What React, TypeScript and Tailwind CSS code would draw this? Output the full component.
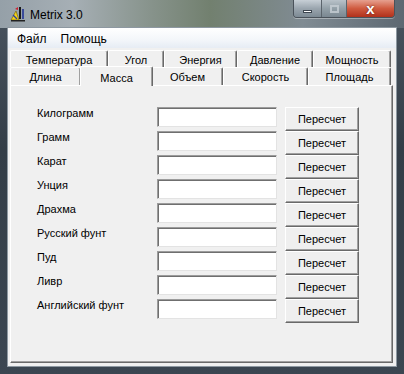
import { Fragment } from "react";

const topTabs = [
  { name: "Температура", w: "w-[98px]" },
  { name: "Угол", w: "w-[56px]" },
  { name: "Энергия", w: "w-[73px]" },
  { name: "Давление", w: "w-[76px]" },
  { name: "Мощность", w: "w-[78px]" },
];

const bottomTabs = [
  { name: "Длина", w: "w-[71px]" },
  { name: "Масса", w: "w-[71px]", active: true },
  { name: "Объем", w: "w-[71px]" },
  { name: "Скорость", w: "w-[85px]" },
  { name: "Площадь", w: "w-[83px]" },
];

const units = [
  "Килограмм",
  "Грамм",
  "Карат",
  "Унция",
  "Драхма",
  "Русский фунт",
  "Пуд",
  "Ливр",
  "Английский фунт",
];

function AppIcon() {
  return (
    <svg width="16" height="16" viewBox="0 0 16 16" className="shrink-0">
      <rect x="9" y="1" width="2" height="12" fill="#1a1a1a" />
      <rect x="12" y="3" width="2" height="10" fill="#3a4a9a" />
      <path d="M1 14 L6 5 L9 14 Z" fill="#f2d21b" stroke="#6b5a00" strokeWidth="0.6" />
      <path d="M3 9 L7 13" stroke="#2b3f9e" strokeWidth="1.2" />
      <rect x="1" y="14" width="14" height="1.5" fill="#222" />
      <path d="M5 3 L8 1 L8 4 Z" fill="#c23" />
    </svg>
  );
}

function Tab({ name, w }: { name: string; w: string }) {
  return (
    <div
      className={`${w} h-full flex items-start justify-center pt-[4px] border-t border-l border-white border-r border-r-[#696969] shadow-[inset_-1px_0_0_#a0a0a0] rounded-tl-[2px] rounded-tr-[2px] bg-[#f0f0f0] text-[11px] text-black leading-none`}
    >
      {name}
    </div>
  );
}

export default function App() {
  return (
    <div className="w-[404px] h-[374px] overflow-hidden flex flex-col bg-[linear-gradient(180deg,#4a5560,#333d47_40%,#3b4651)] font-['Liberation_Sans',sans-serif]">
      {/* title bar */}
      <div className="h-[28px] shrink-0 flex items-start bg-[linear-gradient(90deg,#95a0a8,#a6afb5_18%,#86928a_38%,#72806f_52%,#808b93_75%,#5d6872)]">
        <div className="flex items-center gap-[4px] pl-[10px] pt-[6px]">
          <AppIcon />
          <span className="text-[12px] text-black leading-none pt-[1px]">Metrix 3.0</span>
        </div>
        <div className="ml-auto mr-[9px] flex h-[18px] rounded-b-[4px] border border-t-0 border-[#4a525a] overflow-hidden shadow-[0_1px_0_rgba(255,255,255,0.35)]">
          <div className="w-[28px] flex items-end justify-center pb-[4px] bg-[linear-gradient(180deg,#c7cfd6,#9aa5ae_50%,#7d8a94)] border-r border-[#5b646c]">
            <div className="w-[9px] h-[3px] bg-white border border-[#3d4650]" />
          </div>
          <div className="w-[25px] flex items-center justify-center bg-[linear-gradient(180deg,#b9c2c9,#93a0a8_50%,#7a8791)] border-r border-[#5b646c]">
            <div className="w-[9px] h-[8px] border-[2px] border-[#c7ced4] opacity-80" />
          </div>
          <div className="w-[47px] flex items-center justify-center bg-[linear-gradient(180deg,#e6a08f,#cf5a3f_50%,#b1301b)]">
            <span className="text-white font-bold text-[15px] leading-none -mt-[1px] [text-shadow:0_0_2px_#5a1a0c]">x</span>
          </div>
        </div>
      </div>

      {/* client area */}
      <div className="mx-[8px] h-[338px] flex flex-col bg-[#f0f0f0] shadow-[0_0_0_1px_#8d98a1]">
        {/* menu bar */}
        <div className="h-[20px] shrink-0 flex items-center gap-[14px] pl-[9px] pt-[1px] bg-[linear-gradient(180deg,#ffffff,#f3f6fa_60%,#e6ecf4)] text-[12px] text-black">
          <span>Файл</span>
          <span>Помощь</span>
        </div>

        {/* tabs */}
        <div className="pt-[2px] pl-[2px] flex flex-col">
          <div className="h-[17px] flex">
            {topTabs.map((t) => (
              <Tab key={t.name} name={t.name} w={t.w} />
            ))}
          </div>
          <div className="h-[18px] flex items-end">
            {bottomTabs.map((t) => (
              <Fragment key={t.name}>
                {t.active ? (
                  <div className="relative z-10 w-[73px] h-[20px] -mx-[1px] -mb-[1px] flex items-start justify-center pt-[6px] bg-[#f0f0f0] border-t border-l border-white border-r border-r-[#696969] shadow-[inset_-1px_0_0_#a0a0a0] rounded-tl-[2px] rounded-tr-[2px] text-[11px] text-black leading-none">
                    {t.name}
                  </div>
                ) : (
                  <Tab name={t.name} w={t.w} />
                )}
              </Fragment>
            ))}
          </div>
        </div>

        {/* panel */}
        <div className="flex-1 ml-[2px] mr-[3px] mb-[3px] bg-[#f0f0f0] border-t border-l border-white border-r border-b border-r-[#696969] border-b-[#696969] shadow-[inset_-1px_-1px_0_#a0a0a0] pt-[21px] flex flex-col">
          {units.map((u) => (
            <div key={u} className="h-[24px] flex items-start">
              <div className="w-[146px] pl-[26px] text-[11px] leading-[13px] text-black">{u}</div>
              <div className="w-[120px] h-[20px] bg-white border border-t-[#9c9c9c] border-l-[#9c9c9c] border-r-[#e3e3e3] border-b-[#e3e3e3] shadow-[inset_1px_1px_0_#6f6f6f]" />
              <button className="ml-[8px] w-[74px] h-[24px] flex items-center justify-center bg-[#efefef] border border-t-white border-l-white border-r-[#696969] border-b-[#696969] shadow-[inset_-1px_-1px_0_#a0a0a0] text-[11px] text-black leading-none">
                Пересчет
              </button>
            </div>
          ))}
        </div>
      </div>
    </div>
  );
}
